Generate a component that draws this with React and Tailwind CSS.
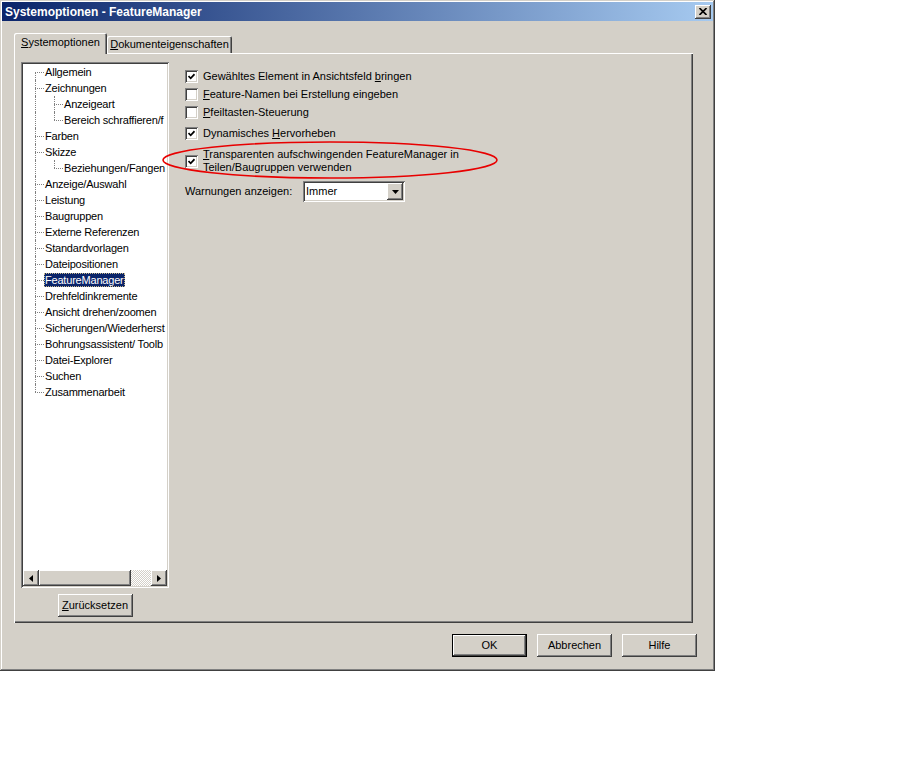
import clsx from 'clsx';

const RAISED = 'shadow-[inset_-1px_-1px_#404040,inset_1px_1px_#ffffff,inset_-2px_-2px_#808080,inset_2px_2px_#d4d0c8]';
const SUNKEN = 'shadow-[inset_1px_1px_#808080,inset_-1px_-1px_#ffffff,inset_2px_2px_#404040,inset_-2px_-2px_#d4d0c8]';

// baum links, level 2 = eingerueckt (texte so wie sichtbar, rechts abgeschnitten)
const TREE = [
  { label: 'Allgemein', level: 1 },
  { label: 'Zeichnungen', level: 1 },
  { label: 'Anzeigeart', level: 2 },
  { label: 'Bereich schraffieren/f', level: 2, lastChild: true },
  { label: 'Farben', level: 1 },
  { label: 'Skizze', level: 1 },
  { label: 'Beziehungen/Fangen', level: 2, lastChild: true },
  { label: 'Anzeige/Auswahl', level: 1 },
  { label: 'Leistung', level: 1 },
  { label: 'Baugruppen', level: 1 },
  { label: 'Externe Referenzen', level: 1 },
  { label: 'Standardvorlagen', level: 1 },
  { label: 'Dateipositionen', level: 1 },
  { label: 'FeatureManager', level: 1, selected: true },
  { label: 'Drehfeldinkremente', level: 1 },
  { label: 'Ansicht drehen/zoomen', level: 1 },
  { label: 'Sicherungen/Wiederherst', level: 1 },
  { label: 'Bohrungsassistent/ Toolb', level: 1 },
  { label: 'Datei-Explorer', level: 1 },
  { label: 'Suchen', level: 1 },
  { label: 'Zusammenarbeit', level: 1 },
];

const Elbow = ({ top, bottom }) => (
  <div className="flex w-[9px] shrink-0 flex-col">
    <div className={clsx('h-[8px]', top && 'border-l border-dotted border-[#808080]')} />
    <div className={clsx('h-[8px] border-t border-dotted border-[#808080]', bottom && 'border-l')} />
  </div>
);

const TreeRow = ({ item, first, last }) => (
  <div className="flex h-[16px] items-stretch whitespace-nowrap pl-[12px]">
    {item.level === 1 ? (
      <Elbow top={!first} bottom={!last} />
    ) : (
      <>
        <div className="w-[19px] shrink-0 border-l border-dotted border-[#808080]" />
        <Elbow top bottom={!item.lastChild} />
      </>
    )}
    <span
      className={clsx(
        'self-center px-[1px] leading-[14px] tracking-[-0.2px]',
        item.selected && 'bg-[#0a246a] text-white outline outline-1 outline-dotted outline-[#c9b98a] -outline-offset-1'
      )}
    >
      {item.label}
    </span>
  </div>
);

const Check = ({ checked }) => (
  <div className={clsx('flex h-[13px] w-[13px] shrink-0 items-center justify-center bg-white', SUNKEN)}>
    {checked && (
      <svg width="7" height="7" viewBox="0 0 7 7">
        <path d="M0.5 3 L2.7 5.3 L6.5 1.2" fill="none" stroke="#000" strokeWidth="1.7" />
      </svg>
    )}
  </div>
);

const Option = ({ checked, children, className }) => (
  <div className={clsx('flex items-center gap-[5px]', className)}>
    <Check checked={checked} />
    <span className="leading-[13px]">{children}</span>
  </div>
);

const Button = ({ children, isDefault }) => (
  <button
    className={clsx(
      'flex h-[23px] w-[75px] items-center justify-center bg-[#d4d0c8] text-black',
      isDefault
        ? 'shadow-[inset_0_0_0_1px_#000000,inset_-2px_-2px_#404040,inset_2px_2px_#ffffff,inset_-3px_-3px_#808080]'
        : RAISED
    )}
  >
    {children}
  </button>
);

const Arrow = ({ dir }) => (
  <div className={clsx('flex h-[16px] w-[16px] shrink-0 items-center justify-center bg-[#d4d0c8]', RAISED)}>
    <svg width="4" height="7" viewBox="0 0 4 7">
      {dir === 'left' ? <path d="M4 0 L0 3.5 L4 7 Z" fill="#000" /> : <path d="M0 0 L4 3.5 L0 7 Z" fill="#000" />}
    </svg>
  </div>
);

export default function App() {
  return (
    <div className="min-h-[782px] w-full bg-white font-['Liberation_Sans',Arial,sans-serif] text-[11px] text-black">
      <div className="relative flex h-[671px] w-[715px] flex-col bg-[#d4d0c8] shadow-[inset_-1px_-1px_#404040,inset_1px_1px_#d4d0c8,inset_-2px_-2px_#808080,inset_2px_2px_#ffffff]">
        {/* titelleiste */}
        <div className="mx-[2px] mt-[2px] flex h-[19px] items-center justify-between bg-[linear-gradient(to_right,#0a246a,#a6caf0)] pl-[3px] pr-[2px]">
          <span className="text-[12px] font-bold text-white">Systemoptionen - FeatureManager</span>
          <div className={clsx('flex h-[14px] w-[16px] items-center justify-center bg-[#d4d0c8]', RAISED)}>
            <svg width="8" height="7" viewBox="0 0 8 7">
              <path d="M0.5 0 L7.5 7 M7.5 0 L0.5 7" stroke="#000" strokeWidth="1.6" />
            </svg>
          </div>
        </div>

        {/* tabs */}
        <div className="ml-[14px] mt-[12px] flex h-[20px] items-end">
          <div className="relative z-10 -mb-px flex h-[21px] w-[93px] items-center justify-center rounded-t-[2px] bg-[#d4d0c8] pb-[2px] shadow-[inset_1px_1px_#ffffff,inset_-1px_0_#404040,inset_-2px_0_#808080]">
            <span><u>S</u>ystemoptionen</span>
          </div>
          <div className="flex h-[17px] w-[125px] items-center justify-center rounded-t-[2px] shadow-[inset_1px_1px_#ffffff,inset_-1px_0_#404040,inset_-2px_0_#808080]">
            <span><u>D</u>okumenteigenschaften</span>
          </div>
        </div>

        {/* panel */}
        <div className="ml-[14px] flex h-[570px] w-[679px] gap-[16px] pl-[7px] pt-[9px] shadow-[inset_1px_1px_#ffffff,inset_-1px_-1px_#404040,inset_-2px_-2px_#808080]">
          <div className="flex flex-col items-center">
            <div className={clsx('flex h-[526px] w-[148px] flex-col bg-white p-[2px]', SUNKEN)}>
              <div className="flex-1 overflow-hidden">
                {TREE.map((item, i) => (
                  <TreeRow key={item.label} item={item} first={i === 0} last={i === TREE.length - 1} />
                ))}
              </div>
              <div className="flex h-[16px]">
                <Arrow dir="left" />
                <div className={clsx('w-[92px] bg-[#d4d0c8]', RAISED)} />
                <div className="flex-1 bg-[repeating-conic-gradient(#ffffff_0%_25%,#d4d0c8_0%_50%)] bg-[length:2px_2px]" />
                <Arrow dir="right" />
              </div>
            </div>
            <div className="mt-[6px]">
              <Button><u>Z</u>urücksetzen</Button>
            </div>
          </div>

          <div className="flex flex-col pt-[8px]">
            <Option checked>Gewähltes Element in Ansichtsfeld <u>b</u>ringen</Option>
            <Option className="mt-[5px]"><u>F</u>eature-Namen bei Erstellung eingeben</Option>
            <Option className="mt-[5px]"><u>P</u>feiltasten-Steuerung</Option>
            <Option checked className="mt-[8px]">Dynamisches <u>H</u>ervorheben</Option>
            <Option checked className="mt-[8px]">
              <u>T</u>ransparenten aufschwingenden FeatureManager in<br />Teilen/Baugruppen verwenden
            </Option>
            <div className="mt-[7px] flex items-center">
              <span className="w-[118px]">Warnungen anzeigen:</span>
              <div className={clsx('flex h-[21px] w-[102px] items-stretch bg-white p-[2px]', SUNKEN)}>
                <span className="flex-1 self-center pl-[1px] leading-[13px]">Immer</span>
                <div className={clsx('flex w-[16px] items-center justify-center bg-[#d4d0c8]', RAISED)}>
                  <svg width="7" height="4" viewBox="0 0 7 4">
                    <path d="M0 0 L7 0 L3.5 4 Z" fill="#000" />
                  </svg>
                </div>
              </div>
            </div>
          </div>
        </div>

        {/* untere buttons */}
        <div className="mt-[11px] flex justify-end gap-[10px] pr-[18px]">
          <Button isDefault>OK</Button>
          <Button>Abbrechen</Button>
          <Button>Hilfe</Button>
        </div>

        {/* rote markierung */}
        <svg className="pointer-events-none absolute left-[160px] top-[139px]" width="344" height="42" viewBox="0 0 344 42">
          <ellipse cx="170" cy="21" rx="167" ry="18" fill="none" stroke="#e80000" strokeWidth="1.6" />
        </svg>
      </div>
    </div>
  );
}
